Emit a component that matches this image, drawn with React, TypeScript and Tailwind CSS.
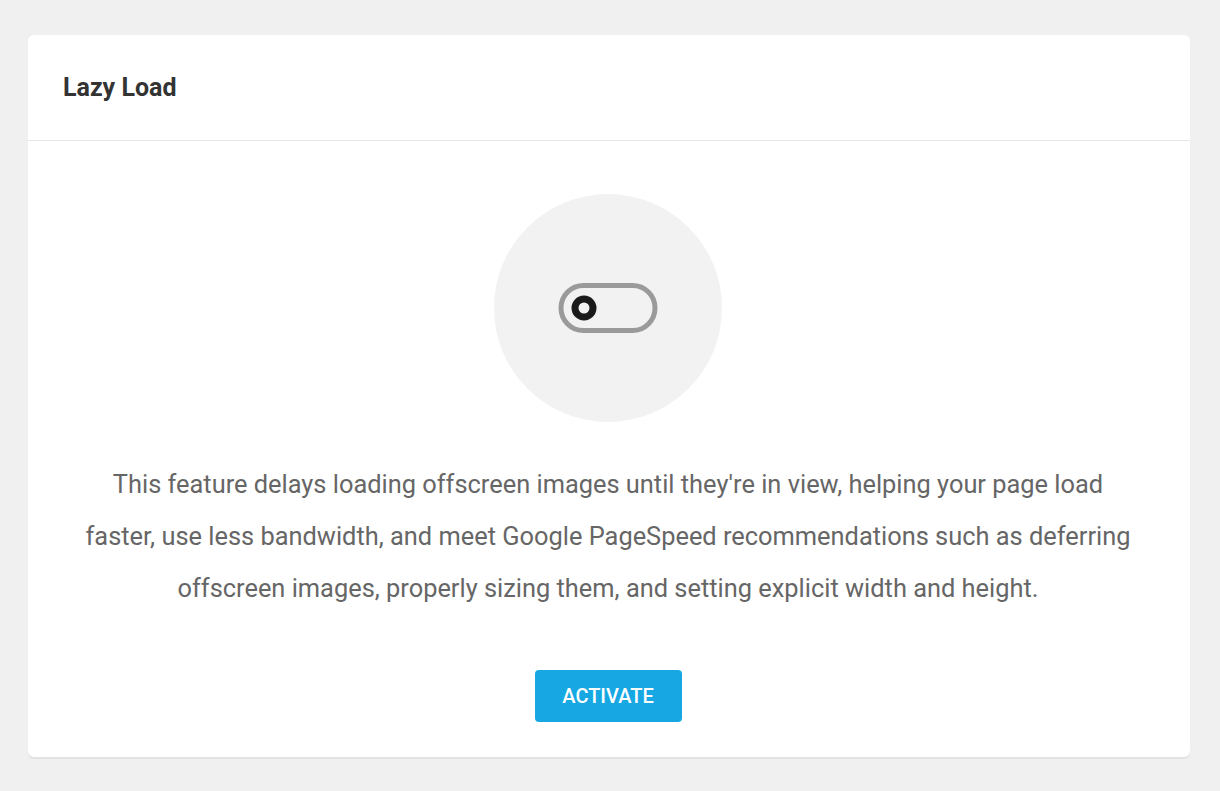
export default function App() {
  return (
    <div className="min-h-[791px] bg-[#f0f0f0] pl-[28px] pr-[30px] pt-[35px] pb-[32px]" style={{ fontFamily: "Roboto, 'Liberation Sans', sans-serif" }}>
      <div className="rounded-[6px] bg-white shadow-[0_2px_0_#e2e2e2]">
        <div className="flex h-[106px] items-center border-b border-[#e6e6e6] px-[35px]">
          <h1 className="text-[25px] font-bold text-[#333333]">Lazy Load</h1>
        </div>
        <div className="flex flex-col items-center pt-[53px] pb-[35px] pr-[2px]">
          <div className="flex h-[228px] w-[228px] items-center justify-center rounded-full bg-[#f2f2f2]">
            <svg width="100" height="52" viewBox="0 0 100 52">
              <rect x="3" y="3.5" width="94" height="45" rx="22.5" fill="none" stroke="#9a9a9a" strokeWidth="5" />
              <circle cx="26" cy="26" r="9" fill="none" stroke="#1a1a1a" strokeWidth="7" />
            </svg>
          </div>
          <p className="mt-[36px] max-w-[1052px] text-center text-[25.4px] leading-[52px] text-[#666666]">
            This feature delays loading offscreen images until they're in view, helping your page load faster, use less bandwidth, and meet Google PageSpeed recommendations such as deferring offscreen images, properly sizing them, and setting explicit width and height.
          </p>
          <button className="mt-[56px] h-[52px] w-[147px] rounded-[4px] bg-[#17a8e3] text-[20px] font-medium text-white">
            ACTIVATE
          </button>
        </div>
      </div>
    </div>
  );
}
